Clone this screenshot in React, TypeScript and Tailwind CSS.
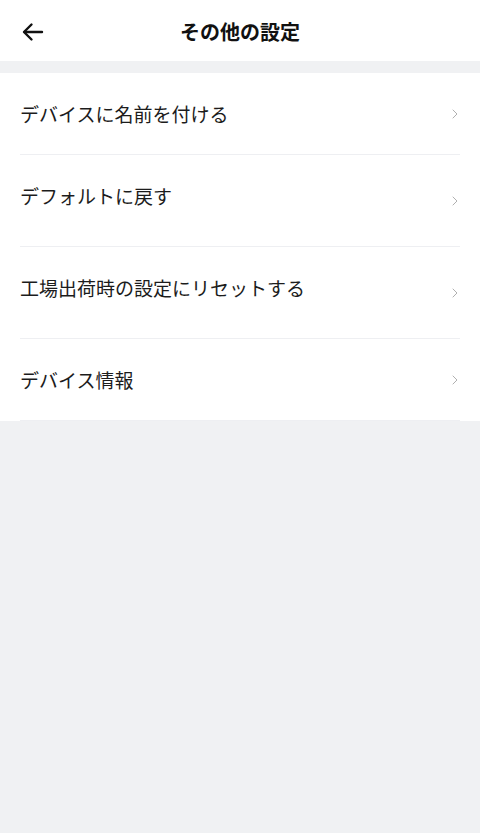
import { ChevronRight } from "lucide-react";

const items = [
  { label: "デバイスに名前を付ける", extra: false },
  { label: "デフォルトに戻す", extra: true },
  { label: "工場出荷時の設定にリセットする", extra: true },
  { label: "デバイス情報", extra: false },
];

export default function App() {
  return (
    <main
      className="min-h-[833px] bg-[#f0f1f3] flex flex-col"
      style={{ fontFamily: '"Noto Sans CJK JP", "Noto Sans", sans-serif' }}
    >
      {/* Header */}
      <header className="h-[61px] bg-white flex items-center relative pt-[3px]">
        <button className="w-[66px] h-full flex items-center pl-[21px] text-[#111]">
          <svg width="24" height="24" viewBox="0 0 24 24" fill="none" stroke="currentColor" strokeWidth="2.4" strokeLinecap="round" strokeLinejoin="round">
            <path d="M21 12H3.5" />
            <path d="M10.5 4.5L3 12l7.5 7.5" />
          </svg>
        </button>
        <h1 className="absolute left-0 right-0 text-center text-[20px] font-bold text-[#111] pointer-events-none">
          その他の設定
        </h1>
      </header>

      {/* List */}
      <section className="mt-3 bg-white px-5">
        {items.map((item) => (
          <div
            key={item.label}
            className="flex items-center justify-between border-b border-[#eeeff2] pt-[27px] pb-[26px]"
          >
            <div className="flex flex-col">
              <span className="text-[19px] leading-[28px] text-[#1c1c1c]">
                {item.label}
              </span>
              {item.extra && <span className="h-[10px]" />}
            </div>
            <ChevronRight className="w-[16px] h-[16px] text-[#b0b0b0] -mr-[3px]" strokeWidth={1.5} />
          </div>
        ))}
      </section>
    </main>
  );
}
